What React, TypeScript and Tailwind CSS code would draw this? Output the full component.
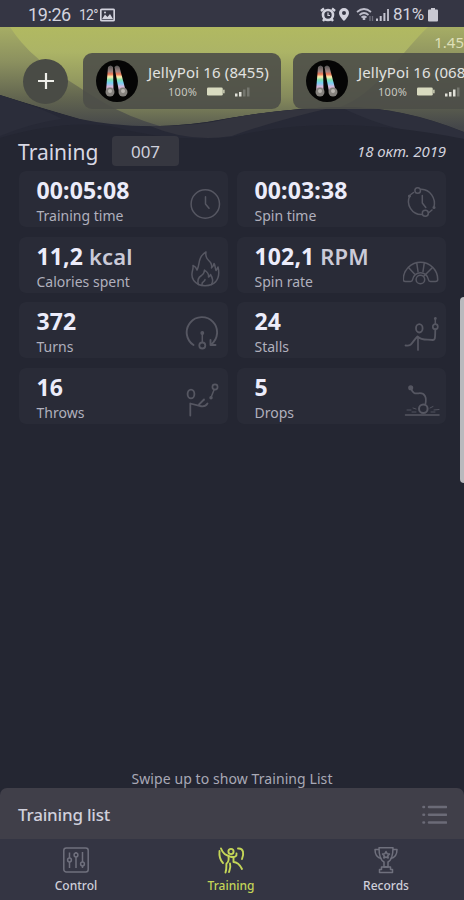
import type { ReactNode } from 'react';

interface Stat {
  value: string;
  unit?: string;
  label: string;
  icon: ReactNode;
}

interface Device {
  name: string;
  charge: string;
  bars: number;
}

const DEVICES: readonly Device[] = [
  { name: 'JellyPoi 16 (8455)', charge: '100%', bars: 2 },
  { name: 'JellyPoi 16 (068', charge: '100%', bars: 3 },
];

const ClockIcon = () => (
  <>
    <circle cx="20.3" cy="19" r="14.2" />
    <path d="M20.5 11.8V19l3.5 4.3" />
  </>
);

const FlameIcon = () => (
  <>
    <path d="M13.500 33.500C9 31 6.500 27 7 22.500C7.200 19.500 8.500 17.500 8 14.500C10.500 15.500 11.500 17 12 19C15 14 12.500 6 21 1C20 6 22.500 8.500 25.500 11.500C26.500 13 27 15 26.500 17C28 16 28.800 14.500 29 12.500C30.500 15 30 17 31 19.500C31.800 18.500 32.500 17.500 33 16C35 24 33 31 26.500 33.500" />
    <path d="M13.500 33.500C12 29 14 26 16.500 24.500C18.500 23 19.500 21 19.500 19C22.500 21 24 23 23.500 26C25 25.500 25 24.500 25.500 23.500C28.500 28 28 31 26.500 33.500C23 35 17 35 13.500 33.500" />
    <path d="M17 33.500C16.500 30.500 20 31 20 28.500" />
  </>
);

const SpinIcon = () => (
  <>
    <path d="M18.500 4.200C27 4.500 33 13 31 22" />
    <path d="M6.500 11.500C3 19 8.500 29.500 18.500 29.500" />
    <path d="M10.500 7.500L7.800 9.500M26 27.500L29 25" />
    <circle cx="14.700" cy="5.500" r="2.800" />
    <circle cx="22.300" cy="28.300" r="3" />
    <circle cx="6.500" cy="11" r="0.800" fill="currentColor" />
    <circle cx="31" cy="22.500" r="0.800" fill="currentColor" />
    <path d="M19.300 10.500V18l3.500 4.500" />
  </>
);

const GaugeIcon = () => (
  <>
    <path d="M2.500 30.500H7.500Q9.300 30.500 9.600 28.500A8 8 0 0 1 25.400 28.500Q25.700 30.500 27.500 30.500H32.500Q34.700 30.500 34.700 28.500A17.200 17.200 0 0 0 0.300 28.500Q0.300 30.500 2.500 30.500Z" />
    <path d="M5.500 16.500L11.500 23M13.800 12.300L15 20.500M21.200 12.300L20 20.500M29.500 16.500L20.500 25.500" />
    <circle cx="17.400" cy="28.500" r="4.300" />
  </>
);

const TurnsIcon = () => (
  <>
    <path d="M8.500 29A15.200 15.200 0 1 1 26 28.500" strokeWidth="1.900" />
    <path d="M25.500 24V29h5" strokeWidth="1.900" />
    <circle cx="17.300" cy="17" r="1.200" fill="currentColor" />
    <path d="M17.300 17v9" />
    <circle cx="17.300" cy="29.500" r="3" strokeWidth="1.800" />
  </>
);

const ThrowsIcon = () => (
  <>
    <ellipse cx="6" cy="12" rx="3.400" ry="4.400" strokeWidth="1.800" />
    <path d="M5.300 33.500V21.500L14.500 23.800Q20 25.500 22.500 21.500" strokeWidth="1.800" />
    <path d="M14 22.500L19 17.500" strokeWidth="1.800" />
    <circle cx="30" cy="5" r="2.600" strokeWidth="1.700" />
    <path d="M29 8L26.200 15" />
    <circle cx="26" cy="15.800" r="1" fill="currentColor" />
  </>
);

const StallsIcon = () => (
  <>
    <ellipse cx="16.300" cy="12.300" rx="3.300" ry="4.200" strokeWidth="1.800" />
    <path d="M2.500 29.500C9 30.500 8 27 14.500 20.500C19 25 24 23 30 24C32.500 23.500 32 22 32.300 13.500" strokeWidth="1.800" />
    <path d="M15 22v12" strokeWidth="1.700" />
    <circle cx="32.300" cy="10.700" r="2.500" strokeWidth="1.700" />
    <path d="M32.300 8V3" />
    <circle cx="32.300" cy="2.500" r="0.700" fill="currentColor" />
  </>
);

const DropsIcon = () => (
  <>
    <circle cx="7.700" cy="5.800" r="1.800" fill="currentColor" />
    <path d="M8 7C11 12.500 12 11.500 15.500 11.300C22 10.500 24 15.500 22.300 22.500" strokeWidth="1.700" />
    <circle cx="20.300" cy="26.800" r="4.300" strokeWidth="2" />
    <path d="M2.500 33H36" />
    <path d="M4 28h4M10 26l3 1M9 30h4M36 27.500l-5 0.500M27 26l3-1.500M28 30h4" strokeWidth="0.900" />
  </>
);

const STATS: readonly Stat[] = [
  { value: '00:05:08', label: 'Training time', icon: <ClockIcon /> },
  { value: '00:03:38', label: 'Spin time', icon: <SpinIcon /> },
  { value: '11,2', unit: 'kcal', label: 'Calories spent', icon: <FlameIcon /> },
  { value: '102,1', unit: 'RPM', label: 'Spin rate', icon: <GaugeIcon /> },
  { value: '372', label: 'Turns', icon: <TurnsIcon /> },
  { value: '24', label: 'Stalls', icon: <StallsIcon /> },
  { value: '16', label: 'Throws', icon: <ThrowsIcon /> },
  { value: '5', label: 'Drops', icon: <DropsIcon /> },
];

const StatusBar = () => (
  <div className="flex h-[27px] items-center bg-[#353644] pl-[28px] pr-[26px] pt-[2px] font-['Roboto',sans-serif] text-[#d3d3de]">
    <span className="w-[43px] text-[18px] leading-none tracking-[-0.400px]">19:26</span>
    <span className="ml-[8px] flex w-[16px] text-[14px] leading-none tracking-[-0.800px]">12°</span>
    <svg className="ml-[5px] h-[14px] w-[15px]" viewBox="0 0 15 14">
      <rect x="0.800" y="1.300" width="13.400" height="11.400" rx="1" fill="none" stroke="#d3d3de" strokeWidth="1.700" />
      <path d="M2 11L5 6.500L7.500 9L10 6L13 11Z" fill="#d3d3de" />
      <circle cx="5" cy="4.500" r="1" fill="#d3d3de" />
    </svg>
    <svg className="ml-auto h-[16px] w-[16px]" viewBox="0 0 16 16">
      <circle cx="8" cy="8" r="5" fill="none" stroke="#d3d3de" strokeWidth="2.600" />
      <path d="M1 4L4 1.500M15 4L12 1.500M3 14l1.500-2M13 14l-1.500-2" stroke="#d3d3de" strokeWidth="2.400" />
      <path d="M8 5.500V8.500H10" fill="none" stroke="#d3d3de" strokeWidth="1.200" />
    </svg>
    <svg className="ml-[2px] h-[15px] w-[12px]" viewBox="0 0 12 15">
      <path
        fillRule="evenodd"
        d="M6 1a5 5 0 0 1 5 5c0 3.500-5 8-5 8S1 9.500 1 6a5 5 0 0 1 5-5Zm0 3a2 2 0 1 0 0 4a2 2 0 0 0 0-4Z"
        fill="#d3d3de"
      />
    </svg>
    <svg className="ml-[6px] h-[16px] w-[18px]" viewBox="0 0 18 16" fill="none" stroke="#bdbdca" strokeWidth="1.700">
      <path d="M1 5Q8 -1 15 5M3.500 8Q8 4 12.500 8M5.500 10.500Q8 8.500 10.500 10.500" />
      <path d="M8 10v3" strokeWidth="2.500" />
      <path d="M14 9v5M16.500 9v5" stroke="#6e6f7c" strokeWidth="1.300" />
    </svg>
    <svg className="ml-[2px] h-[14px] w-[14px]" viewBox="0 0 14 14" fill="#c4c4d0">
      <rect x="0" y="10.500" width="2" height="2.500" />
      <rect x="3.700" y="8" width="2" height="5" />
      <rect x="7.400" y="5" width="2" height="8" />
      <rect x="11.100" y="1" width="1.800" height="12" />
    </svg>
    <span className="ml-[3px] w-[33px] text-[17px] leading-none tracking-[-0.200px]">81%</span>
    <svg className="ml-[2px] h-[14px] w-[10px]" viewBox="0 0 10 14" fill="#c9c9d3">
      <rect x="3" y="0" width="4" height="2" />
      <rect x="0" y="1.500" width="10" height="12" rx="1" />
    </svg>
  </div>
);

const HeroWaves = () => (
  <svg className="absolute inset-0 h-[116px] w-full" viewBox="0 27 464 116" preserveAspectRatio="none">
    <defs>
      <linearGradient id="sky" x1="0" y1="27" x2="0" y2="127" gradientUnits="userSpaceOnUse">
        <stop offset="0" stopColor="#b1b961" />
        <stop offset="0.250" stopColor="#acb466" />
        <stop offset="0.700" stopColor="#858a5c" />
        <stop offset="1" stopColor="#5b5e50" />
      </linearGradient>
      <linearGradient id="shade" x1="0" y1="27" x2="0" y2="127" gradientUnits="userSpaceOnUse">
        <stop offset="0" stopColor="#a6ad65" />
        <stop offset="0.350" stopColor="#8b905f" />
        <stop offset="0.700" stopColor="#636650" />
        <stop offset="1" stopColor="#45474a" />
      </linearGradient>
    </defs>
    <rect x="0" y="27" width="464" height="116" fill="#242632" />
    <path d="M0 27H464V136Q400 106 340 107Q290 108 230 118Q150 134 80 119Q45 109 0 95Z" fill="url(#sky)" />
    <path d="M0 27H10C22 45 35 58 60 75C95 97 115 113 160 126Q110 128 80 119Q45 109 0 95Z" fill="url(#shade)" />
    <path d="M428 27H464V132Q400 106 340 107C375 95 405 48 428 27Z" fill="url(#shade)" />
    <path d="M0 95Q45 109 80 119Q150 134 230 118Q290 108 340 107Q400 106 464 132V143H0Z" fill="#272936" />
    <path d="M0 95Q45 109 62 119Q35 122 0 136Z" fill="#2b2d3a" />
    <path d="M150 126Q195 127 232 118Q280 109 330 108Q270 122 232 136Q190 143 150 126Z" fill="#33343e" />
    <path d="M340 107Q400 106 464 132V139Q400 136 340 107Z" fill="#2d2f3c" />
    <path d="M0 138Q60 120 110 126Q170 143 232 137Q330 112 464 139V143H0Z" fill="#242632" />
  </svg>
);

const PoiAvatar = () => (
  <svg className="h-[42px] w-[42px] shrink-0" viewBox="0 0 42 42">
    <defs>
      <linearGradient id="rainbow" x1="0" y1="0" x2="0" y2="1">
        <stop offset="0" stopColor="#555" />
        <stop offset="0.220" stopColor="#9c8482" />
        <stop offset="0.320" stopColor="#ec7657" />
        <stop offset="0.420" stopColor="#fff0b0" />
        <stop offset="0.530" stopColor="#7ee0b0" />
        <stop offset="0.650" stopColor="#78cdf5" />
        <stop offset="0.780" stopColor="#d8b8dc" />
        <stop offset="1" stopColor="#8b8783" />
      </linearGradient>
    </defs>
    <circle cx="21" cy="21" r="21" fill="#050505" />
    <path d="M12 7Q14.500 4 17 7L17.500 31Q14 34 10 31Z" fill="url(#rainbow)" />
    <path d="M18.500 7Q21 4 23.500 7L29.500 30Q27 34 23 32Z" fill="url(#rainbow)" />
    <circle cx="14" cy="32" r="4.500" fill="#85827e" />
    <circle cx="27" cy="32" r="4.500" fill="#85827e" />
    <circle cx="14" cy="31" r="2" fill="#bab6b1" />
    <circle cx="27" cy="31" r="2" fill="#bab6b1" />
  </svg>
);

const DeviceCard = ({ device }: { device: Device }) => (
  <div className="flex h-[56px] w-[198px] shrink-0 items-center rounded-[9px] bg-[#4c4e48]/90 pl-[13px]">
    <PoiAvatar />
    <div className="ml-[10px] flex w-[124px] flex-col">
      <span className="whitespace-nowrap text-[15px] leading-[21px] tracking-[0.150px] text-[#e2e2e0]">{device.name}</span>
      <div className="flex h-[18px] items-center pl-[20px] text-[#c8c8c0]">
        <span className="w-[31px] text-[11px] leading-none tracking-[0.300px]">{device.charge}</span>
        <svg className="ml-[7px] h-[9px] w-[20px]" viewBox="0 0 20 10" fill="#d9dbc0">
          <rect x="0" y="0.500" width="17.500" height="9" rx="1.500" />
          <rect x="18" y="3" width="1.500" height="4" />
        </svg>
        <svg className="ml-[9px] h-[10px] w-[16px]" viewBox="0 0 16 10">
          {[3, 4.5, 7, 9].map((height, index) => (
            <rect
              key={height}
              x={index * 4}
              y={9.5 - height}
              width="2.500"
              height={height}
              fill={index < device.bars ? '#e0e0d8' : '#74766e'}
            />
          ))}
        </svg>
      </div>
    </div>
  </div>
);

const StatCard = ({ stat }: { stat: Stat }) => (
  <div className="flex h-[56px] justify-between rounded-[7px] bg-[#292b37] pl-[17.500px] pr-[3px]">
    <div className="flex flex-col pt-[5px]">
      <span className="whitespace-nowrap text-[23px] font-bold leading-[28px] tracking-[0.150px] text-[#ececfa]">
        {stat.value}
        {stat.unit && <span className="text-[22px] font-semibold text-[#cacad8]"> {stat.unit}</span>}
      </span>
      <span className="text-[14px] leading-[24px] text-[#b0b0bd]">{stat.label}</span>
    </div>
    <svg
      className="mt-[14px] h-[40px] w-[40px] text-[#565762]"
      viewBox="0 0 40 40"
      fill="none"
      stroke="currentColor"
      strokeWidth="1.500"
      strokeLinecap="round"
      strokeLinejoin="round"
    >
      {stat.icon}
    </svg>
  </div>
);

const ControlIcon = () => (
  <svg className="h-[28px] w-[28px]" viewBox="0 0 28 28" fill="none" stroke="#6f707d" strokeWidth="1.500">
    <rect x="1.800" y="2" width="24.400" height="24" rx="2.500" />
    <path d="M7.500 6.500V12M7.500 16V22M14 6V7M14 11V22M20.500 6V16M20.500 20V22" />
    <circle cx="7.500" cy="14" r="1.900" />
    <circle cx="14" cy="9" r="1.900" />
    <circle cx="20.500" cy="18" r="1.900" />
  </svg>
);

const DancerIcon = () => (
  <svg
    className="h-[28px] w-[28px]"
    viewBox="0 0 28 28"
    fill="none"
    stroke="#c4d558"
    strokeWidth="1.900"
    strokeLinecap="round"
    strokeLinejoin="round"
  >
    <circle cx="14" cy="5.500" r="2.600" />
    <path d="M4 2.500C6 8 9 9 13 10.500C18 12 20 10 19.500 7.500" />
    <path d="M2.500 5C2 10 3 14 6 17" />
    <path d="M21 2.500C27 2 27 8 25 13" />
    <path d="M11.500 10.500C12 14 12 16 9.500 17.500C9 20 10 22 8.500 26.500" />
    <path d="M16.500 11.500V16C20 16 23 19 25 23" />
    <path d="M13 17.500C14 21 13 23 12 26" />
  </svg>
);

const TrophyIcon = () => (
  <svg className="h-[28px] w-[28px]" viewBox="0 0 28 28" fill="none" stroke="#6f707d" strokeWidth="1.500" strokeLinejoin="round">
    <path d="M7 1.800H21C21 9 20 14 16 16V21H12V16C8 14 7 9 7 1.800Z" />
    <path d="M7 3.500H3C3 9 5 12 9.500 12.500M21 3.500H25C25 9 23 12 18.500 12.500" />
    <path d="M14 5.500L15.100 7.700L17.500 8L15.800 9.700L16.200 12L14 11L11.800 12L12.200 9.700L10.500 8L12.900 7.700Z" />
    <path d="M9.500 21H18.500V23.500H20.500V26.500H7.500V23.500H9.500Z" />
  </svg>
);

export default function App() {
  return (
    <div className="relative flex h-[900px] w-[464px] flex-col overflow-hidden bg-[#242632] font-['Noto_Sans',sans-serif]">
      <StatusBar />

      <header className="relative h-[109px] shrink-0">
        <HeroWaves />
        <div className="relative flex h-[26px] justify-end">
          <span className="pt-[5px] text-[15px] leading-[20px] text-[#dedfb8]">1.45</span>
        </div>
        <div className="relative flex w-[464px] items-center gap-[12px] overflow-hidden pl-[23px]">
          <button
            type="button"
            aria-label="Add device"
            className="mr-[3px] flex h-[45px] w-[45px] shrink-0 items-center justify-center rounded-full bg-[#494b45]"
          >
            <svg className="h-[18px] w-[18px]" viewBox="0 0 18 18" stroke="#efefea" strokeWidth="2.200">
              <path d="M9 1V17M1 9H17" />
            </svg>
          </button>
          {DEVICES.map((device) => (
            <DeviceCard key={device.name} device={device} />
          ))}
        </div>
      </header>

      <main className="relative flex flex-1 flex-col">
        <div className="flex h-[35px] items-start pl-[18px] pr-[18px]">
          <h1 className="w-[94px] whitespace-nowrap text-[21px] leading-[33px] text-[#d8d8e4]">Training</h1>
          <span className="flex h-[30px] w-[67px] items-center justify-center rounded-[4px] bg-[#363740] pt-[2px] text-[17px] text-[#d0d0dc]">
            007
          </span>
          <span className="ml-auto whitespace-nowrap text-[15px] italic leading-[31px] tracking-[-0.100px] text-[#d2d2dd]">
            18 окт. 2019
          </span>
        </div>
        <section className="grid grid-cols-[209px_209px] gap-x-[9px] gap-y-[9.500px] pl-[19px]">
          {STATS.map((stat) => (
            <StatCard key={stat.label} stat={stat} />
          ))}
        </section>
        <p className="mt-auto text-center text-[14px] leading-[19px] tracking-[0.080px] text-[#a9a9b6]">
          Swipe up to show Training List
        </p>
      </main>

      <div className="flex h-[51px] shrink-0 items-center justify-between rounded-t-[7px] bg-[#403f49] pl-[18px] pr-[17px] pt-[2px]">
        <span className="text-[17px] font-medium tracking-[-0.200px] text-[#d0d0dc]">Training list</span>
        <svg className="h-[20px] w-[25px]" viewBox="0 0 25 20" stroke="#6b6b77" strokeWidth="2.600" strokeLinecap="round">
          <path d="M7 2H24M7 9.700H24M7 17.500H24M1.500 2H2M1.500 9.700H2M1.500 17.500H2" />
        </svg>
      </div>

      <nav className="flex h-[61px] shrink-0 justify-between bg-[#343543] pl-[36px] pr-[38px] pt-[7px] text-[12px] font-medium leading-[18px] text-[#cfcfda]">
        <div className="flex w-[80px] flex-col items-center gap-[3px]">
          <ControlIcon />
          <span>Control</span>
        </div>
        <div className="flex w-[80px] flex-col items-center gap-[3px] text-[#c4d558]">
          <DancerIcon />
          <span>Training</span>
        </div>
        <div className="flex w-[80px] flex-col items-center gap-[3px]">
          <TrophyIcon />
          <span>Records</span>
        </div>
      </nav>

      {/* edge panel handle sits over the page */}
      <div className="absolute right-0 top-[297px] h-[186px] w-[4px] rounded-l-[4px] bg-[#b9b9bd]" />
    </div>
  );
}
